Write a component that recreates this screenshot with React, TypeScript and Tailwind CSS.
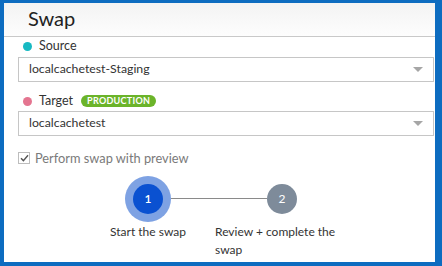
import React from 'react';

const font = { fontFamily: 'Lato, "Open Sans", sans-serif' };

function Caret() {
  return (
    <svg width="10" height="6" viewBox="0 0 10 6" className="shrink-0">
      <path d="M0 0 L10 0 L5 5 Z" fill="#a6a6a6" />
    </svg>
  );
}

function SelectBox({ value }: { value: string }) {
  return (
    <div className="flex h-[25px] items-center justify-between border border-[#c6c6c6] bg-white pl-[10px] pr-[10px]">
      <span className="text-[12.3px] text-[#333]">{value}</span>
      <Caret />
    </div>
  );
}

function Step({ n, label, active }: { n: number; label: string; active?: boolean }) {
  return (
    <div className="flex w-[46px] flex-col items-center overflow-visible">
      <div className="flex h-[46px] w-[46px] items-center justify-center">
        {active ? (
          <div className="flex h-[46px] w-[46px] items-center justify-center rounded-full bg-[#7ea2e3]">
            <div className="flex h-[30px] w-[30px] items-center justify-center rounded-full bg-[#0a51d1] text-[12px] font-semibold text-white">
              {n}
            </div>
          </div>
        ) : (
          <div className="flex h-[30px] w-[30px] items-center justify-center rounded-full bg-[#7e8b9a] text-[12px] text-white">
            {n}
          </div>
        )}
      </div>
      <div className="mt-[1px] w-max max-w-[134px] text-left text-[12px] leading-[18px] text-[#333]">{label}</div>
    </div>
  );
}

export default function App() {
  return (
    <div style={font} className="h-[266px] w-[442px] overflow-hidden bg-[#0d6cc0] pb-[4px] pl-[4px] pr-[7px] pt-[3px]">
      <div className="flex h-full w-full flex-col bg-white">
        <div className="flex h-[34px] items-center border-b border-[#c9c9c9] bg-gradient-to-b from-[#f3f3f3] to-[#fdfdfd] pb-[3px] pl-[24px]">
          <h1 className="text-[20px] leading-none text-[#222]">Swap</h1>
        </div>
        <div className="flex flex-col pl-[14px] pr-[1px]">
          <div className="flex h-[18px] items-center gap-[7px] pl-[5px]">
            <span className="h-[9px] w-[9px] rounded-full bg-[#17b9c2]" />
            <span className="text-[12.5px] text-[#333]">Source</span>
          </div>
          <div className="mt-[2px]">
            <SelectBox value="localcachetest-Staging" />
          </div>
          <div className="mt-[12px] flex h-[14px] items-center gap-[7px] pl-[5px]">
            <span className="h-[9px] w-[9px] rounded-full bg-[#e47590]" />
            <span className="text-[12.5px] text-[#333]">Target</span>
            <span className="ml-[1px] flex h-[12px] items-center rounded-full bg-[#6bb42a] px-[6px] text-[9px] font-bold tracking-[0.3px] text-white">
              PRODUCTION
            </span>
          </div>
          <div className="mt-[3px]">
            <SelectBox value="localcachetest" />
          </div>
          <div className="mt-[14px] flex items-center gap-[5px]">
            <span className="flex h-[12px] w-[12px] items-center justify-center border border-[#bdbdbd] bg-white">
              <svg width="9" height="8" viewBox="0 0 9 8">
                <path d="M1 4.2 L3.4 6.6 L8 1.2" fill="none" stroke="#555" strokeWidth="1.4" />
              </svg>
            </span>
            <span className="text-[12.8px] leading-[16px] text-[#7a7a7a]">Perform swap with preview</span>
          </div>
          <div className="mt-[10px] flex items-start pl-[107px]">
            <Step n={1} label="Start the swap" active />
            <div className="mt-[22px] h-[1px] w-[96px] bg-[#8a8a8a]" />
            <div className="-ml-[8px]">
              <Step n={2} label="Review + complete the swap" />
            </div>
          </div>
        </div>
      </div>
    </div>
  );
}
